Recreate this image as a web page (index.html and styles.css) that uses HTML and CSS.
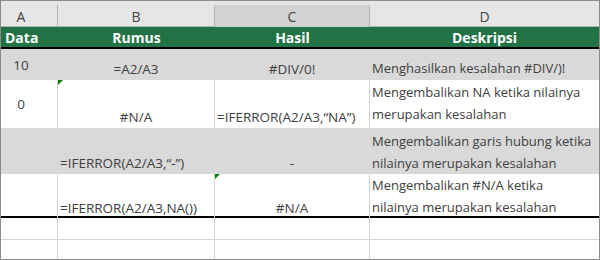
FILE: index.html
```html
<!DOCTYPE html>
<html>
<head>
<meta charset="utf-8">
<link rel="stylesheet" href="styles.css">
</head>
<body>
<div class="sheet">
  <div class="row colheads">
    <div class="ch ch-a"><div class="chi">A</div></div>
    <div class="ch"><div class="chi">B</div></div>
    <div class="ch ch-sel"><div class="chi">C</div></div>
    <div class="ch ch-last"><div class="chi">D</div></div>
  </div>
  <div class="row head">
    <div class="c hl">Data</div>
    <div class="c hc">Rumus</div>
    <div class="c hc">Hasil</div>
    <div class="c hc">Deskripsi</div>
  </div>
  <div class="row r2 shaded">
    <div class="c num">10</div>
    <div class="c ctr">=A2/A3</div>
    <div class="c ctr">#DIV/0!</div>
    <div class="c desc bottom">Menghasilkan kesalahan #DIV/)!</div>
  </div>
  <div class="row r3">
    <div class="c num">0</div>
    <div class="c ctr flag">#N/A</div>
    <div class="c left">=IFERROR(A2/A3,“NA”)</div>
    <div class="c desc t3">Mengembalikan NA ketika nilainya<br>merupakan kesalahan</div>
  </div>
  <div class="row r4 shaded">
    <div class="c num"></div>
    <div class="c left">=IFERROR(A2/A3,“-”)</div>
    <div class="c ctr">-</div>
    <div class="c desc t4">Mengembalikan garis hubung ketika<br>nilainya merupakan kesalahan</div>
  </div>
  <div class="row r5">
    <div class="c num"></div>
    <div class="c left">=IFERROR(A2/A3,NA())</div>
    <div class="c ctr flag">#N/A</div>
    <div class="c desc t5">Mengembalikan #N/A ketika<br>nilainya merupakan kesalahan</div>
  </div>
  <div class="row e1">
    <div class="c"></div><div class="c"></div><div class="c"></div><div class="c"></div>
  </div>
  <div class="row e2">
    <div class="c"></div><div class="c"></div><div class="c"></div><div class="c"></div>
  </div>
</div>
</body>
</html>
```
FILE: styles.css
```css
* { box-sizing: border-box; }
html, body { margin: 0; padding: 0; background: #fff; }
.sheet {
  width: 600px;
  height: 260px;
  border: 1px solid #8c8c8c;
  font-family: "Open Sans", "Noto Sans", sans-serif;
  font-size: 13.5px;
  color: #404040;
  overflow: hidden;
}
.row {
  display: grid;
  grid-template-columns: 57px 157px 155px 229px;
}
.c {
  border-right: 1px solid #d4d4d4;
  display: flex;
  white-space: nowrap;
  overflow: visible;
  position: relative;
}
.c:last-child { border-right: none; }

/* column letters */
.colheads { height: 26px; background: #e6e6e6; }
.ch { padding-top: 4px; height: 26px; }
.chi {
  height: 22px;
  border-right: 1px solid #b4b4b4;
  border-bottom: 1px solid #b4b4b4;
  display: flex;
  align-items: center;
  justify-content: center;
  font-size: 14px;
  color: #444;
  padding-top: 1px;
}
.ch-a .chi { padding-right: 16px; }
.ch-sel .chi { background: #d2d2d2; border-bottom: none; }
.ch-last .chi { border-right: none; }

/* green header */
.head {
  height: 22px;
  background: #217346;
  border-bottom: 2px solid #000;
  color: #fff;
  font-weight: bold;
  font-size: 14px;
}
.head .c { border-right: none; align-items: center; }
.hl { padding-left: 4px; }
.hc { justify-content: center; }

.shaded { background: #d9d9d9; }
.shaded .c { border-right-color: #d9d9d9; }
.r2 { height: 31px; }
.r3 { height: 48px; }
.r4 { height: 46px; }
.r5 { height: 44px; border-bottom: 2px solid #000; }
.e1 { height: 22px; border-bottom: 1px solid #d4d4d4; }
.e2 { height: 19px; }

.num { align-items: center; justify-content: center; padding-right: 16px; }
.ctr { justify-content: center; align-items: flex-end; padding-bottom: 2px; }
.left { align-items: flex-end; padding-left: 2px; padding-bottom: 2px; }
.desc {
  font-size: 13px;
  line-height: 22px;
  padding-left: 2px;
}
.bottom { align-items: flex-end; padding-bottom: 1px; }
.t3 { align-items: flex-start; padding-top: 1px; }
.t4 { align-items: flex-start; padding-top: 2px; }
.t5 { align-items: flex-end; padding-bottom: 1px; }

.flag::before {
  content: "";
  position: absolute;
  left: 0;
  top: 0;
  border-top: 5px solid #0f7b0f;
  border-right: 5px solid transparent;
}
```
